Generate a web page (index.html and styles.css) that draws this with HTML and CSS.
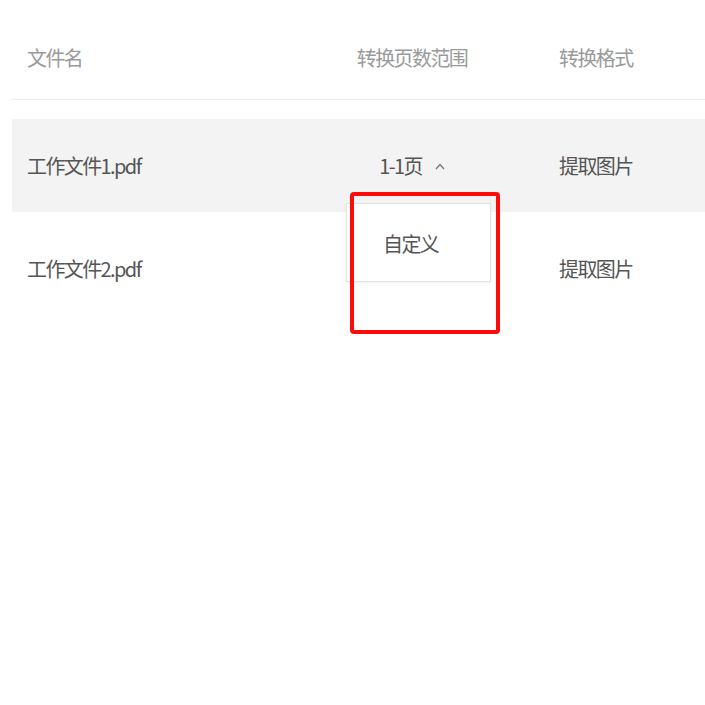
FILE: index.html
```html
<!DOCTYPE html>
<html lang="zh">
<head>
<meta charset="utf-8">
<link rel="stylesheet" href="styles.css">
</head>
<body>
<div class="table">
  <div class="row head">
    <div class="cell c1">文件名</div>
    <div class="cell c2">转换页数范围</div>
    <div class="cell c3">转换格式</div>
  </div>
  <div class="row body active">
    <div class="cell c1">工作文件1.pdf</div>
    <div class="cell c2">
      <span class="range">1-1页<svg class="caret" width="10" height="7" viewBox="0 0 10 7"><path d="M1 6 L5 1.5 L9 6" fill="none" stroke="#777" stroke-width="1.3"/></svg></span>
      <div class="dropdown"><div class="option">自定义</div></div>
      <div class="highlight"></div>
    </div>
    <div class="cell c3">提取图片</div>
  </div>
  <div class="row body">
    <div class="cell c1">工作文件2.pdf</div>
    <div class="cell c2"></div>
    <div class="cell c3">提取图片</div>
  </div>
</div>
</body>
</html>
```
FILE: styles.css
```css
html, body {
  margin: 0;
  padding: 0;
  background: #ffffff;
}
body {
  min-height: 705px;
  font-family: "Noto Sans CJK SC", "Noto Sans", sans-serif;
  font-size: 20px;
  letter-spacing: -1.6px;
}
.table {
  padding-left: 12px;
}
.row {
  display: grid;
  grid-template-columns: 332px 136px 1fr;
  align-items: center;
}
.head {
  height: 100px;
  border-bottom: 1px solid #f0f0f0;
  color: #9a9a9a;
  padding-top: 16px;
  box-sizing: border-box;
  margin-bottom: 19px;
}
.body {
  color: #555555;
}
.row.body:nth-child(2) {
  height: 93px;
  background: #f3f3f3;
}
.row.body:nth-child(3) {
  height: 130px;
  padding-bottom: 18px;
  box-sizing: border-box;
}
.cell.c1 {
  padding-left: 15px;
}
.cell.c2 {
  text-align: center;
  position: relative;
  height: 100%;
  display: flex;
  align-items: center;
  justify-content: center;
}
.cell.c3 {
  padding-left: 79px;
}
.range {
  display: inline-flex;
  align-items: center;
  gap: 13px;
  padding-left: 0;
}
.caret {
  display: block;
  margin-top: 2px;
}
.dropdown {
  position: absolute;
  left: 2px;
  top: 84px;
  width: 145px;
  height: 79px;
  background: #ffffff;
  border: 1px solid #e2e2e2;
  box-shadow: 0 1px 3px rgba(0,0,0,0.06);
  box-sizing: border-box;
  z-index: 2;
}
.option {
  padding: 26px 0 0 36px;
  text-align: left;
  color: #555555;
  line-height: 28px;
}
.highlight {
  position: absolute;
  left: 6px;
  top: 73px;
  width: 150px;
  height: 142px;
  border: 4px solid #ff0a0a;
  border-radius: 4px;
  box-sizing: border-box;
  z-index: 3;
}
```
